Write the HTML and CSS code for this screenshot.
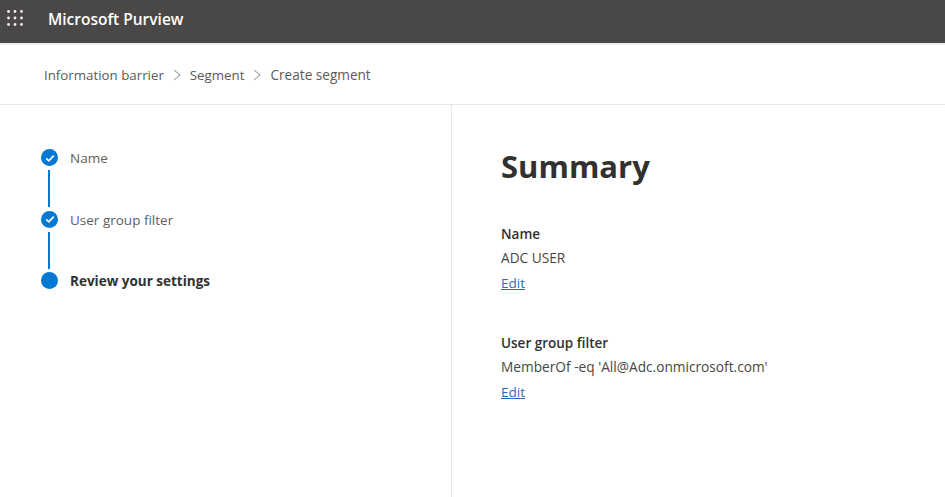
FILE: index.html
```html
<!DOCTYPE html>
<html lang="en">
<head>
	<meta charset="UTF-8">
	<title>Create segment</title>
	<link rel="stylesheet" href="styles.css">
</head>
<body>
	<header class="topbar">
		<svg class="waffle" width="16" height="16" viewBox="0 0 16 16">
			<g fill="#f4eeee">
				<circle cx="1.5" cy="1.5" r="1.4"/><circle cx="8" cy="1.5" r="1.4"/><circle cx="14.5" cy="1.5" r="1.4"/>
				<circle cx="1.5" cy="8" r="1.4"/><circle cx="8" cy="8" r="1.4"/><circle cx="14.5" cy="8" r="1.4"/>
				<circle cx="1.5" cy="14.5" r="1.4"/><circle cx="8" cy="14.5" r="1.4"/><circle cx="14.5" cy="14.5" r="1.4"/>
			</g>
		</svg>
		<span class="brand">Microsoft Purview</span>
	</header>
	<nav class="crumbs">
		<span>Information barrier</span>
		<svg class="chev" width="8" height="12" viewBox="0 0 8 12"><path d="M1 1l6 5-6 5" fill="none" stroke="#8a8886"/></svg>
		<span>Segment</span>
		<svg class="chev" width="8" height="12" viewBox="0 0 8 12"><path d="M1 1l6 5-6 5" fill="none" stroke="#8a8886"/></svg>
		<span class="crumb-last">Create segment</span>
	</nav>
	<main class="wizard">
		<ul class="steps">
			<li class="step done">
				<span class="dot"><svg width="18" height="18" viewBox="0 0 18 18"><path d="M5.2 9.3l2.6 2.5 5-5.2" fill="none" stroke="#fff" stroke-width="1.7"/></svg></span>
				<span class="step-name">Name</span>
			</li>
			<li class="step done">
				<span class="dot"><svg width="18" height="18" viewBox="0 0 18 18"><path d="M5.2 9.3l2.6 2.5 5-5.2" fill="none" stroke="#fff" stroke-width="1.7"/></svg></span>
				<span class="step-name">User group filter</span>
			</li>
			<li class="step current">
				<span class="dot"></span>
				<span class="step-name">Review your settings</span>
			</li>
		</ul>
		<section class="summary">
			<h1>Summary</h1>
			<div class="group">
				<h2>Name</h2>
				<p>ADC USER</p>
				<a href="#">Edit</a>
			</div>
			<div class="group">
				<h2>User group filter</h2>
				<p>MemberOf -eq 'All@Adc.onmicrosoft.com'</p>
				<a href="#">Edit</a>
			</div>
		</section>
	</main>
</body>
</html>
```
FILE: styles.css
```css
* {
	box-sizing: border-box;
}
html, body {
	height: 100%;
}
body {
	margin: 0;
	display: flex;
	flex-direction: column;
	overflow: hidden;
	background: #fff;
	color: #323130;
	font-family: "Open Sans", "Noto Sans", sans-serif;
	font-size: 13.5px;
}
.topbar {
	height: 45px;
	flex: none;
	display: flex;
	align-items: center;
	padding: 0 0 2px 7px;
	background: #494846;
	border-bottom: 2px solid #ececec;
}
.waffle {
	margin-bottom: 5px;
}
.brand {
	margin-left: 25px;
	margin-bottom: 4px;
	color: #fff;
	font-size: 15.5px;
	font-weight: 600;
}
.crumbs {
	height: 60px;
	flex: none;
	display: flex;
	align-items: center;
	gap: 9px;
	padding-left: 44px;
	border-bottom: 1px solid #e6e6e6;
	color: #5c5a58;
	font-size: 13.3px;
}
.crumb-last {
	font-size: 13.6px;
}
.wizard {
	flex: 1;
	display: flex;
}
.steps {
	width: 452px;
	flex: none;
	margin: 0;
	padding: 43px 0 0 41px;
	list-style: none;
	border-right: 1px solid #e6e6e6;
}
.step {
	position: relative;
	height: 61.5px;
	display: flex;
	gap: 12px;
}
.step:not(:last-child)::after {
	content: "";
	position: absolute;
	left: 7px;
	top: 22px;
	width: 2px;
	height: 37px;
	background: #0078d4;
}
.dot {
	width: 17px;
	height: 17px;
	flex: none;
	margin-top: 1px;
	border-radius: 50%;
	background: #0078d4;
}
.dot svg {
	display: block;
	margin: -0.5px;
}
.step-name {
	margin-top: 1px;
	line-height: 18px;
	color: #605e5c;
}
.current .step-name {
	color: #323130;
	font-weight: 700;
}
.summary {
	padding: 40px 0 0 49px;
}
.summary h1 {
	margin: 0 0 34.7px;
	font-size: 31px;
	line-height: 42px;
	font-weight: 700;
}
.group {
	margin-bottom: 35.5px;
	line-height: 24.5px;
}
.group h2 {
	margin: 0;
	font-size: inherit;
	font-weight: 600;
}
.group p {
	margin: 0;
	color: #484644;
	font-size: 13.7px;
}
.group a {
	color: #2b6cb8;
}
```
